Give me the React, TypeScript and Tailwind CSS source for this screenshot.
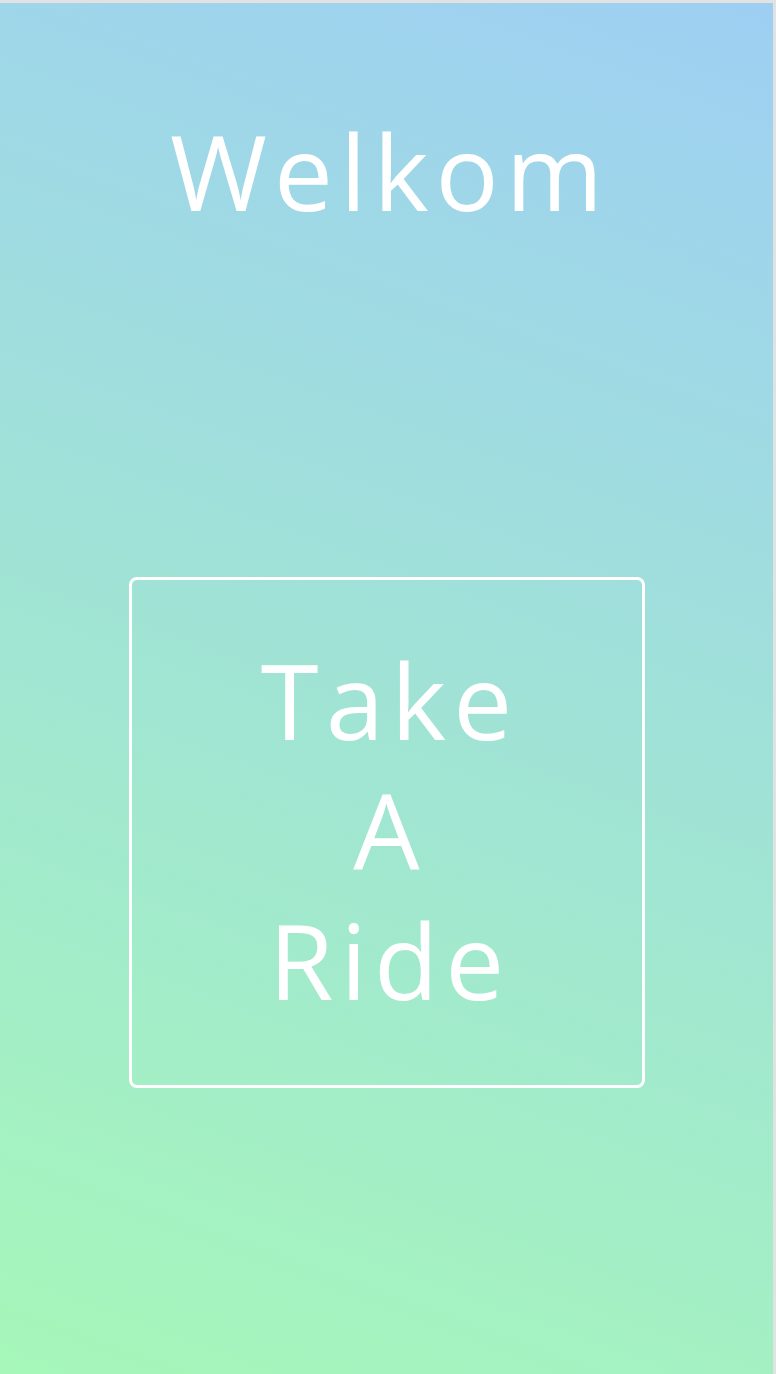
export default function App() {
  return (
    <div className="w-[776px] h-[1374px] bg-[#e2e2e2] pt-[3px]">
      <div
        className="w-[773px] h-[1371px] flex flex-col items-center text-white bg-linear-20 from-[#a6f7b9] via-[#a0e3d5] to-[#9ecff3]"
        style={{ fontFamily: '"Open Sans", "Noto Sans", sans-serif' }}
      >
        <h1 className="mt-[103px] pl-[7px] text-[105px] leading-[130px] font-normal tracking-[7px]">Welkom</h1>
        <div className="mt-[341px] w-[516px] h-[511px] border-[3px] border-white rounded-[8px] flex items-center justify-center">
          <div className="text-center pl-[7px] -mt-[6px] text-[105px] leading-[130px] font-normal tracking-[7px]">
            <div>Take</div>
            <div>A</div>
            <div>Ride</div>
          </div>
        </div>
      </div>
    </div>
  );
}
